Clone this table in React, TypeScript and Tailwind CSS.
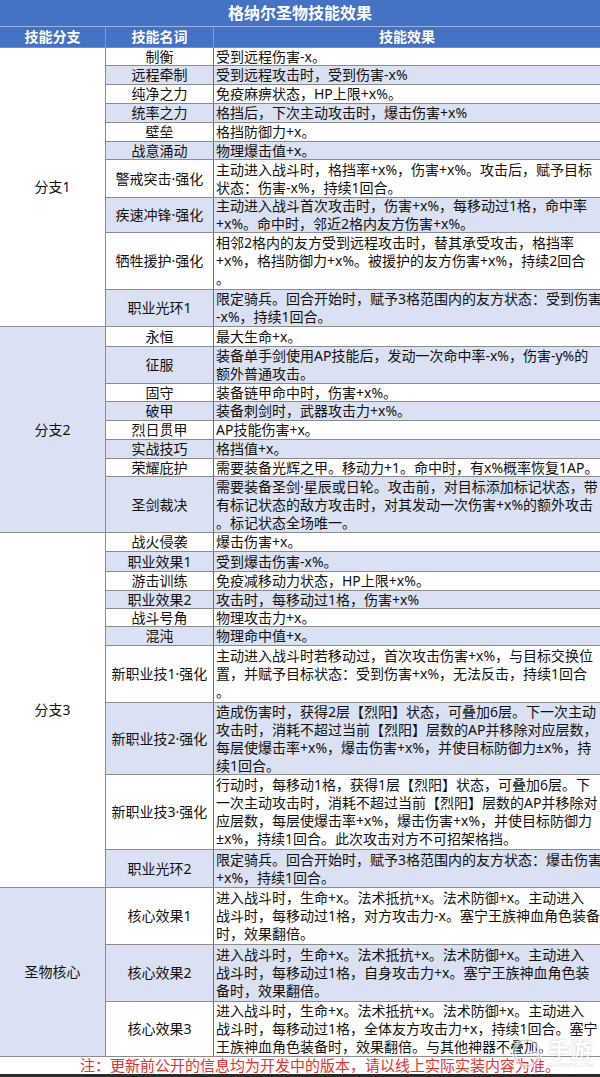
import React from "react";

type Row = { name: string; lines: string[]; h: string };
type Group = { name: string; bg: string; rows: Row[] };

const groups: Group[] = [
  {
    name: "分支1",
    bg: "bg-white",
    rows: [
      { name: "制衡", lines: ["受到远程伤害-x。"], h: "h-[18px]" },
      { name: "远程牵制", lines: ["受到远程攻击时，受到伤害-x%"], h: "h-[19px]" },
      { name: "纯净之力", lines: ["免疫麻痹状态，HP上限+x%。"], h: "h-[19px]" },
      { name: "统率之力", lines: ["格挡后，下次主动攻击时，爆击伤害+x%"], h: "h-[19px]" },
      { name: "壁垒", lines: ["格挡防御力+x。"], h: "h-[19px]" },
      { name: "战意涌动", lines: ["物理爆击值+x。"], h: "h-[18px]" },
      {
        name: "警戒突击·强化",
        lines: ["主动进入战斗时，格挡率+x%，伤害+x%。攻击后，赋予目标", "状态：伤害-x%，持续1回合。"],
        h: "h-[38px]",
      },
      {
        name: "疾速冲锋·强化",
        lines: ["主动进入战斗首次攻击时，伤害+x%，每移动过1格，命中率", "+x%。命中时，邻近2格内友方伤害+x%。"],
        h: "h-[35px]",
      },
      {
        name: "牺牲援护·强化",
        lines: [
          "相邻2格内的友方受到远程攻击时，替其承受攻击，格挡率",
          "+x%，格挡防御力+x%。被援护的友方伤害+x%，持续2回合",
          "。",
        ],
        h: "h-[57px]",
      },
      {
        name: "职业光环1",
        lines: ["限定骑兵。回合开始时，赋予3格范围内的友方状态：受到伤害", "-x%，持续1回合。"],
        h: "h-[37px]",
      },
    ],
  },
  {
    name: "分支2",
    bg: "bg-[#d9e1f2]",
    rows: [
      { name: "永恒", lines: ["最大生命+x。"], h: "h-[20px]" },
      {
        name: "征服",
        lines: ["装备单手剑使用AP技能后，发动一次命中率-x%，伤害-y%的", "额外普通攻击。"],
        h: "h-[37px]",
      },
      { name: "固守", lines: ["装备链甲命中时，伤害+x%。"], h: "h-[18px]" },
      { name: "破甲", lines: ["装备刺剑时，武器攻击力+x%。"], h: "h-[19px]" },
      { name: "烈日贯甲", lines: ["AP技能伤害+x。"], h: "h-[19px]" },
      { name: "实战技巧", lines: ["格挡值+x。"], h: "h-[19px]" },
      { name: "荣耀庇护", lines: ["需要装备光辉之甲。移动力+1。命中时，有x%概率恢复1AP。"], h: "h-[18px]" },
      {
        name: "圣剑裁决",
        lines: [
          "需要装备圣剑·星辰或日轮。攻击前，对目标添加标记状态，带",
          "有标记状态的敌方攻击时，对其发动一次伤害+x%的额外攻击",
          "。标记状态全场唯一。",
        ],
        h: "h-[56px]",
      },
    ],
  },
  {
    name: "分支3",
    bg: "bg-white",
    rows: [
      { name: "战火侵袭", lines: ["爆击伤害+x。"], h: "h-[19px]" },
      { name: "职业效果1", lines: ["受到爆击伤害-x%。"], h: "h-[20px]" },
      { name: "游击训练", lines: ["免疫减移动力状态，HP上限+x%。"], h: "h-[19px]" },
      { name: "职业效果2", lines: ["攻击时，每移动过1格，伤害+x%"], h: "h-[18px]" },
      { name: "战斗号角", lines: ["物理攻击力+x。"], h: "h-[18px]" },
      { name: "混沌", lines: ["物理命中值+x。"], h: "h-[19px]" },
      {
        name: "新职业技1·强化",
        lines: [
          "主动进入战斗时若移动过，首次攻击伤害+x%，与目标交换位",
          "置，并赋予目标状态：受到伤害+x%，无法反击，持续1回合",
          "。",
        ],
        h: "h-[57px]",
      },
      {
        name: "新职业技2·强化",
        lines: [
          "造成伤害时，获得2层【烈阳】状态，可叠加6层。下一次主动",
          "攻击时，消耗不超过当前【烈阳】层数的AP并移除对应层数，",
          "每层使爆击率+x%，爆击伤害+x%，并使目标防御力±x%，持",
          "续1回合。",
        ],
        h: "h-[72px]",
      },
      {
        name: "新职业技3·强化",
        lines: [
          "行动时，每移动1格，获得1层【烈阳】状态，可叠加6层。下",
          "一次主动攻击时，消耗不超过当前【烈阳】层数的AP并移除对",
          "应层数，每层使爆击率+x%，爆击伤害+x%，并使目标防御力",
          "±x%，持续1回合。此次攻击对方不可招架格挡。",
        ],
        h: "h-[75px]",
      },
      {
        name: "职业光环2",
        lines: ["限定骑兵。回合开始时，赋予3格范围内的友方状态：爆击伤害", "+x%，持续1回合。"],
        h: "h-[38px]",
      },
    ],
  },
  {
    name: "圣物核心",
    bg: "bg-[#d9e1f2]",
    rows: [
      {
        name: "核心效果1",
        lines: [
          "进入战斗时，生命+x。法术抵抗+x。法术防御+x。主动进入",
          "战斗时，每移动过1格，对方攻击力-x。塞宁王族神血角色装备",
          "时，效果翻倍。",
        ],
        h: "h-[57px]",
      },
      {
        name: "核心效果2",
        lines: [
          "进入战斗时，生命+x。法术抵抗+x。法术防御+x。主动进入",
          "战斗时，每移动过1格，自身攻击力+x。塞宁王族神血角色装",
          "备时，效果翻倍。",
        ],
        h: "h-[57px]",
      },
      {
        name: "核心效果3",
        lines: [
          "进入战斗时，生命+x。法术抵抗+x。法术防御+x。主动进入",
          "战斗时，每移动过1格，全体友方攻击力+x，持续1回合。塞宁",
          "王族神血角色装备时，效果翻倍。与其他神器不叠加。",
        ],
        h: "h-[55px]",
      },
    ],
  },
];

export default function App() {
  let idx = 0;
  return (
    <div className="relative w-[600px] h-[1077px] overflow-hidden bg-white text-[14px] text-[#111] font-['Noto_Sans','Noto_Sans_CJK_SC',sans-serif]">
      {/* title */}
      <div className="h-[27px] bg-[#4472c4] border-b border-[#9db2de] flex items-center justify-center text-white font-bold text-[16px] leading-none">
        格纳尔圣物技能效果
      </div>
      {/* header */}
      <div className="h-[21px] bg-[#4472c4] border-b border-[#8c8c8c] flex text-white font-bold leading-none">
        <div className="w-[106px] border-r border-[#7f9bd0] flex items-center justify-center">技能分支</div>
        <div className="w-[108px] border-r border-[#7f9bd0] flex items-center justify-center">技能名词</div>
        <div className="flex-1 flex items-center justify-center">技能效果</div>
      </div>
      {groups.map((g) => (
        <div key={g.name} className="flex">
          <div
            className={`w-[106px] shrink-0 border-r border-b border-[#8c8c8c] flex items-center justify-center leading-[18px] ${g.bg}`}
          >
            {g.name}
          </div>
          <div className="flex-1 flex flex-col">
            {g.rows.map((r) => {
              const blue = idx % 2 === 1;
              idx++;
              return (
                <div
                  key={r.name}
                  className={`flex border-b border-[#8c8c8c] overflow-hidden ${r.h} ${blue ? "bg-[#d9e1f2]" : "bg-white"}`}
                >
                  <div className="w-[108px] shrink-0 border-r border-[#6f6f6f] flex items-center justify-center text-center leading-[18px] whitespace-nowrap">
                    {r.name}
                  </div>
                  <div className="flex-1 flex flex-col justify-center pl-[2px] leading-[18px] whitespace-nowrap overflow-hidden">
                    {r.lines.map((l, i) => (
                      <div key={i}>{l}</div>
                    ))}
                  </div>
                </div>
              );
            })}
          </div>
        </div>
      ))}
      {/* note */}
      <div className="h-[20px] border-b-[3px] border-[#2a2a2a] flex items-center pl-[80px] text-[15px] leading-none text-[#e8302c] whitespace-nowrap">
        注：更新前公开的信息均为开发中的版本，请以线上实际实装内容为准。
      </div>
      {/* watermark */}
      <div className="absolute left-[510px] top-[1036px] flex items-center gap-[4px] opacity-60 pointer-events-none">
        <svg width="34" height="34" viewBox="0 0 34 34">
          <circle cx="17" cy="17" r="13" fill="none" stroke="#ffffff" strokeWidth="4" />
          <circle cx="17" cy="17" r="13" fill="none" stroke="#a0a0a0" strokeWidth="1" />
          <path d="M17 17 H27" stroke="#ffffff" strokeWidth="4" />
        </svg>
        <div className="flex flex-col items-start">
          <span className="text-[22px] font-bold leading-none text-white [text-shadow:0_0_2px_#888]">手游</span>
          <span className="text-[6px] leading-none text-[#d0d0d0] mt-[2px]">GAMEDOG.COM</span>
        </div>
      </div>
    </div>
  );
}
